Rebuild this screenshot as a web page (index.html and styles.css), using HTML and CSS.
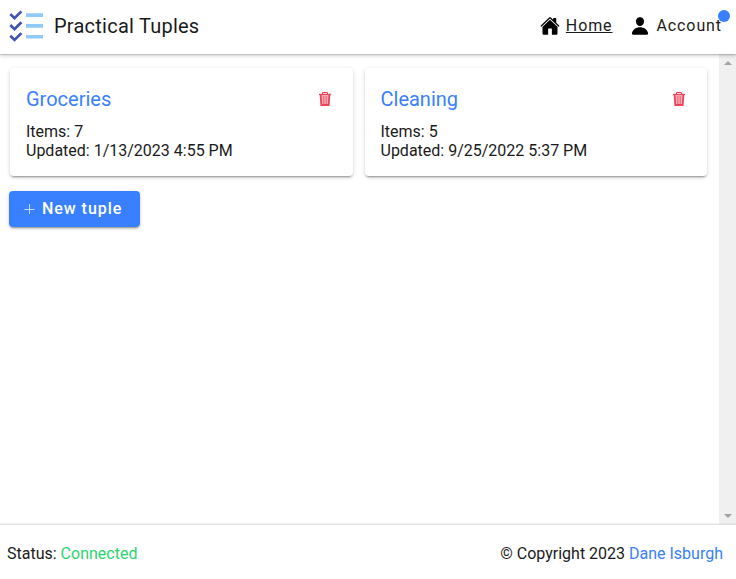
FILE: index.html
```html
<!DOCTYPE html>
<html lang="en">
<head>
<meta charset="utf-8">
<title>Practical Tuples</title>
<link rel="stylesheet" href="styles.css">
</head>
<body>
<svg class="defs" width="0" height="0">
  <symbol id="trash" viewBox="0 0 16 16">
    <path fill="#f8acb8" d="M4 4h8v10H4z"/>
    <path fill="none" stroke="#eb445a" stroke-width="1.8" d="M3.6 4l.7 10h7.4l.7-10"/>
    <path fill="none" stroke="#eb445a" stroke-width="1" d="M5.5 3V1.5h5V3"/>
    <path fill="none" stroke="#eb445a" stroke-width="1.3" d="M2 3.4h12"/>
    <path fill="none" stroke="#eb445a" stroke-width=".5" d="M6.5 5v8M8 5v8M9.5 5v8"/>
  </symbol>
</svg>
<header class="header">
  <div class="brand">
    <svg class="logo" width="34" height="34" viewBox="0 0 34 34">
      <path fill="none" stroke="#3f51b5" stroke-width="2.7" d="M1.3 5.1l4.2 4.1L12.4 2.4M1.3 16l4.2 4.1 6.9-6.8M1.3 26.8l4.2 4.1 6.9-6.8"/>
      <path fill="#90caf9" d="M17 4.2h17v3.7H17zM17 15.1h17v3.6H17zM17 25.9h17v3.6H17z"/>
    </svg>
    <span class="title">Practical Tuples</span>
  </div>
  <nav class="nav">
    <a class="link">
      <svg width="20" height="20" viewBox="0 0 512 512"><path d="M261.56 101.28a8 8 0 00-11.06 0L66.4 277.15a8 8 0 00-2.47 5.79L63.9 448a32 32 0 0032 32H192a16 16 0 0016-16V328a8 8 0 018-8h80a8 8 0 018 8v136a16 16 0 0016 16h96.06a32 32 0 0032-32V282.94a8 8 0 00-2.47-5.79z"/><path d="M490.91 244.15l-74.8-71.56V64a16 16 0 00-16-16h-48a16 16 0 00-16 16v32l-57.92-55.38C272.77 35.14 264.71 32 256 32c-8.68 0-16.72 3.14-22.14 8.63L21.16 244.13c-6.22 6-7 15.87-1.34 22.37A16 16 0 0043 267.56L250.5 69.28a8 8 0 0111.06 0l207.52 198.28a16 16 0 0022.59-.44c6.14-6.36 5.63-16.86-.76-22.97z"/></svg>
      <span class="label current">Home</span>
    </a>
    <a class="link">
      <svg width="20" height="20" viewBox="0 0 512 512"><path d="M332.64 64.58C313.18 43.57 286 32 256 32c-30.16 0-57.43 11.5-76.8 32.38-19.58 21.11-29.12 49.8-26.88 80.78C156.76 206.28 203.27 256 256 256s99.16-49.71 103.67-110.82c2.27-30.7-7.33-59.33-27.03-80.6zM432 480H80a31 31 0 01-24.2-11.13c-6.5-7.77-9.12-18.38-7.18-29.11C57.06 392.94 83.4 353.61 124.8 326c36.78-24.51 83.37-38 131.2-38s94.42 13.5 131.2 38c41.4 27.6 67.74 66.93 76.18 113.75 1.94 10.73-.68 21.34-7.18 29.11A31 31 0 01432 480z"/></svg>
      <span class="label">Account</span>
      <i class="badge"></i>
    </a>
  </nav>
</header>
<main class="main">
  <section class="content">
    <div class="cards">
      <article class="card">
        <div class="card-head"><h2>Groceries</h2><svg class="trash"><use href="#trash"/></svg></div>
        <p>Items: 7<br>Updated: 1/13/2023 4:55 PM</p>
      </article>
      <article class="card">
        <div class="card-head"><h2>Cleaning</h2><svg class="trash"><use href="#trash"/></svg></div>
        <p>Items: 5<br>Updated: 9/25/2022 5:37 PM</p>
      </article>
    </div>
    <button class="new">
      <svg width="12" height="12" viewBox="0 0 12 12"><path stroke="#fff" stroke-opacity=".7" stroke-width="1" d="M5.5 1v10M.5 6.5h10"/></svg>
      <span>New tuple</span>
    </button>
  </section>
  <div class="scrollbar"><i class="up"></i><i class="down"></i></div>
</main>
<footer class="footer">
  <span>Status: <span class="ok">Connected</span></span>
  <span>© Copyright 2023 <a class="author">Dane Isburgh</a></span>
</footer>
</body>
</html>
```
FILE: styles.css
```css
* { box-sizing: border-box; }
body {
  margin: 0;
  height: 579px;
  display: flex;
  flex-direction: column;
  overflow: hidden;
  background: #fff;
  color: #1a1a1a;
  font-family: Roboto, "Liberation Sans", sans-serif;
  font-size: 16px;
}
.defs { position: absolute; }
.header {
  height: 54px;
  flex: none;
  display: flex;
  justify-content: space-between;
  padding: 0 14px 0 9px;
  background: #fff;
  box-shadow: 0 1px 1px rgba(0,0,0,.14), 0 2px 4px rgba(0,0,0,.16);
  z-index: 1;
}
.brand { display: flex; align-items: center; }
.logo { margin-top: -3px; }
.title { margin: -2px 0 0 11px; font-size: 20px; letter-spacing: .24px; }
.nav { display: flex; gap: 18px; padding-bottom: 3px; }
.link { position: relative; display: flex; align-items: center; gap: 6px; }
.link svg { color: #000; }
.label { line-height: 19px; letter-spacing: .9px; }
.current { text-decoration: underline; }
.badge {
  position: absolute;
  top: 10px;
  right: -8px;
  width: 12px;
  height: 12px;
  border-radius: 50%;
  background: #3880ff;
}
.main { flex: 1; display: flex; min-height: 0; }
.content { flex: 1; padding: 14px 12px 0 10px; }
.cards { display: grid; grid-template-columns: 1fr 1fr; gap: 12px; }
.card {
  height: 108px;
  padding: 18px 20px 0 16px;
  border-radius: 4px;
  background: #fff;
  box-shadow: 0 3px 1px -2px rgba(0,0,0,.2), 0 2px 2px rgba(0,0,0,.14), 0 1px 5px rgba(0,0,0,.12);
}
.card-head { display: flex; align-items: center; justify-content: space-between; height: 26px; }
.card h2 { margin: 0; font-size: 20px; font-weight: 400; color: #3880ff; }
.trash { width: 16px; height: 16px; }
.card p { margin: 10px 0 0; line-height: 19px; }
.new {
  display: flex;
  align-items: center;
  gap: 6px;
  width: 131px;
  height: 36px;
  margin: 15px 0 0 -1px;
  padding: 0 0 1px 15px;
  border: 0;
  border-radius: 4px;
  background: #3880ff;
  color: #fff;
  font: 500 16px/19px Roboto, sans-serif;
  letter-spacing: .96px;
  box-shadow: 0 3px 1px -2px rgba(0,0,0,.2), 0 2px 2px rgba(0,0,0,.14), 0 1px 5px rgba(0,0,0,.12);
}
.scrollbar {
  width: 17px;
  display: flex;
  flex-direction: column;
  align-items: center;
  justify-content: space-between;
  padding: 7px 0 6px;
  background: #f0f0f0;
}
.up, .down { border: 4px solid transparent; }
.up { border-top: 0; border-bottom-color: #a3a3a3; }
.down { border-bottom: 0; border-top-color: #a3a3a3; }
.footer {
  height: 55px;
  flex: none;
  display: flex;
  align-items: center;
  justify-content: space-between;
  padding: 3px 13px 0 7px;
  border-top: 1px solid #e2e2e2;
  background: #fff;
  box-shadow: 0 -1px 1px rgba(0,0,0,.04);
}
.ok { color: #2dd36f; }
.author { color: #3880ff; }
```
